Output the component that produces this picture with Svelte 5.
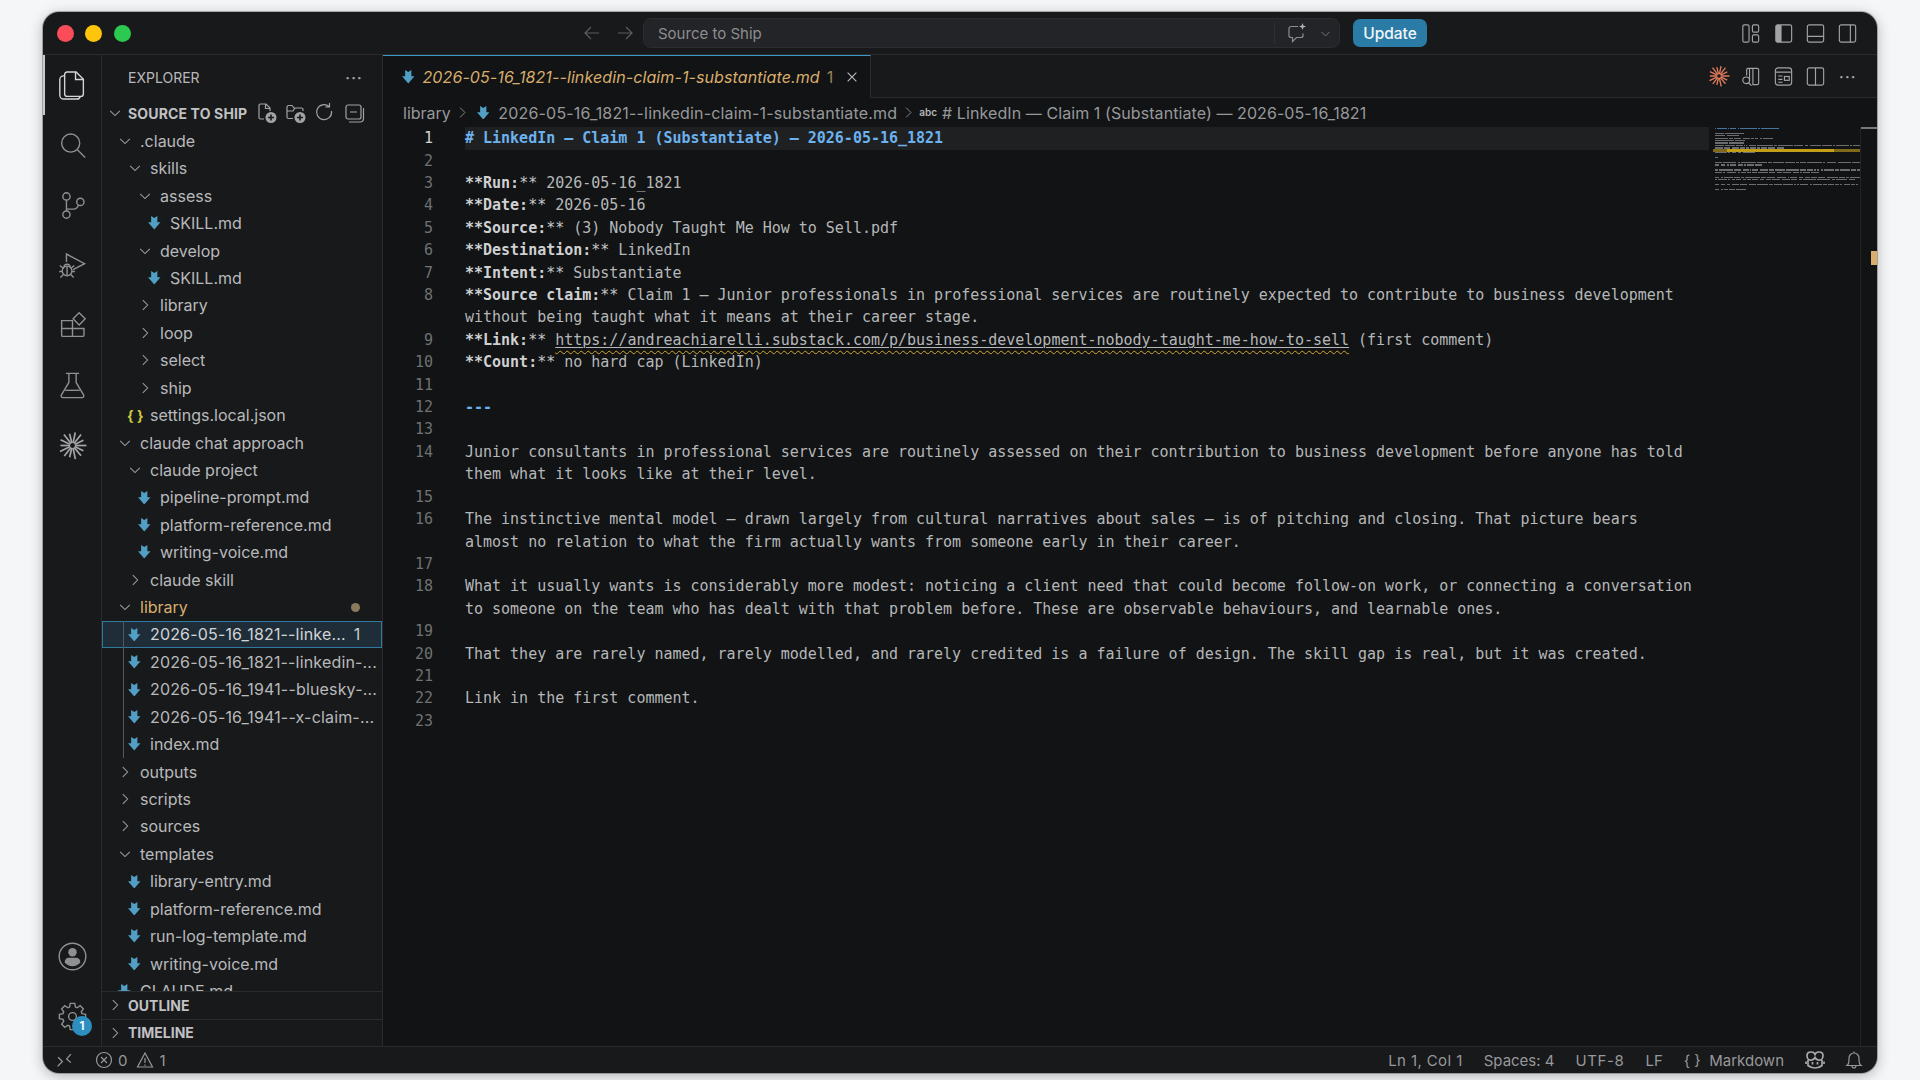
<script>
  const tree = [
    { name: '.claude', depth: 0, kind: 'open' },
    { name: 'skills', depth: 1, kind: 'open' },
    { name: 'assess', depth: 2, kind: 'open' },
    { name: 'SKILL.md', depth: 3, kind: 'md' },
    { name: 'develop', depth: 2, kind: 'open' },
    { name: 'SKILL.md', depth: 3, kind: 'md' },
    { name: 'library', depth: 2, kind: 'closed' },
    { name: 'loop', depth: 2, kind: 'closed' },
    { name: 'select', depth: 2, kind: 'closed' },
    { name: 'ship', depth: 2, kind: 'closed' },
    { name: 'settings.local.json', depth: 1, kind: 'json' },
    { name: 'claude chat approach', depth: 0, kind: 'open' },
    { name: 'claude project', depth: 1, kind: 'open' },
    { name: 'pipeline-prompt.md', depth: 2, kind: 'md' },
    { name: 'platform-reference.md', depth: 2, kind: 'md' },
    { name: 'writing-voice.md', depth: 2, kind: 'md' },
    { name: 'claude skill', depth: 1, kind: 'closed' },
    { name: 'library', depth: 0, kind: 'open', modified: true },
    { name: '2026-05-16_1821--linke...', depth: 1, kind: 'md', selected: true, guide: true, dated: true },
    { name: '2026-05-16_1821--linkedin-...', depth: 1, kind: 'md', guide: true, dated: true },
    { name: '2026-05-16_1941--bluesky-...', depth: 1, kind: 'md', guide: true, dated: true },
    { name: '2026-05-16_1941--x-claim-...', depth: 1, kind: 'md', guide: true, dated: true },
    { name: 'index.md', depth: 1, kind: 'md', guide: true },
    { name: 'outputs', depth: 0, kind: 'closed' },
    { name: 'scripts', depth: 0, kind: 'closed' },
    { name: 'sources', depth: 0, kind: 'closed' },
    { name: 'templates', depth: 0, kind: 'open' },
    { name: 'library-entry.md', depth: 1, kind: 'md' },
    { name: 'platform-reference.md', depth: 1, kind: 'md' },
    { name: 'run-log-template.md', depth: 1, kind: 'md' },
    { name: 'writing-voice.md', depth: 1, kind: 'md' },
    { name: 'CLAUDE.md', depth: 0, kind: 'md' },
  ];

  const url = 'https://andreachiarelli.substack.com/p/business-development-nobody-taught-me-how-to-sell';

  const rows = [
    { n: 1, text: '# LinkedIn — Claim 1 (Substantiate) — 2026-05-16_1821', type: 'heading' },
    { n: 2, text: '' },
    { n: 3, text: '**Run:** 2026-05-16_1821' },
    { n: 4, text: '**Date:** 2026-05-16' },
    { n: 5, text: '**Source:** (3) Nobody Taught Me How to Sell.pdf' },
    { n: 6, text: '**Destination:** LinkedIn' },
    { n: 7, text: '**Intent:** Substantiate' },
    { n: 8, text: '**Source claim:** Claim 1 — Junior professionals in professional services are routinely expected to contribute to business development' },
    { n: null, text: 'without being taught what it means at their career stage.' },
    { n: 9, text: '**Link:** ' + url + ' (first comment)', type: 'link' },
    { n: 10, text: '**Count:** no hard cap (LinkedIn)' },
    { n: 11, text: '' },
    { n: 12, text: '---', type: 'heading' },
    { n: 13, text: '' },
    { n: 14, text: 'Junior consultants in professional services are routinely assessed on their contribution to business development before anyone has told' },
    { n: null, text: 'them what it looks like at their level.' },
    { n: 15, text: '' },
    { n: 16, text: 'The instinctive mental model — drawn largely from cultural narratives about sales — is of pitching and closing. That picture bears' },
    { n: null, text: 'almost no relation to what the firm actually wants from someone early in their career.' },
    { n: 17, text: '' },
    { n: 18, text: 'What it usually wants is considerably more modest: noticing a client need that could become follow-on work, or connecting a conversation' },
    { n: null, text: 'to someone on the team who has dealt with that problem before. These are observable behaviours, and learnable ones.' },
    { n: 19, text: '' },
    { n: 20, text: 'That they are rarely named, rarely modelled, and rarely credited is a failure of design. The skill gap is real, but it was created.' },
    { n: 21, text: '' },
    { n: 22, text: 'Link in the first comment.' },
    { n: 23, text: '' },
  ];

  // **Label:** prefix, the rest of the line stays plain
  function bold(text) {
    const m = text.match(/^\*\*(.+?)\*\*(.*)$/);
    return m ? { label: m[1], rest: m[2] } : null;
  }

  const claudeRays = [0, 26, 50, 78, 104, 128, 154, 180, 206, 232, 256, 282, 308, 334].map((deg, i) => {
    const a = (deg * Math.PI) / 180;
    const r = i % 3 === 0 ? 11.5 : i % 3 === 1 ? 10 : 11;
    return { x1: 12 + Math.cos(a) * 2, y1: 12 + Math.sin(a) * 2, x2: 12 + Math.cos(a) * r, y2: 12 + Math.sin(a) * r };
  });

  // eight teeth around the centre of a 24 box
  function gearPath() {
    const pts = [];
    for (let i = 0; i < 8; i++) {
      const c = (i * Math.PI) / 4;
      const list = [[8.2, -0.3], [11, -0.17], [11, 0.17], [8.2, 0.3]];
      for (const [r, d] of list) {
        pts.push((12 + Math.cos(c + d) * r).toFixed(2) + ' ' + (12 + Math.sin(c + d) * r).toFixed(2));
      }
    }
    return 'M' + pts.join('L') + 'Z';
  }
  const gear = gearPath();
</script>

{#snippet md()}
  <svg class="md" viewBox="0 0 12 13"><polygon points="3,0 6,2 9,0 9,6 12,6 6,13 0,6 3,6" /></svg>
{/snippet}

{#snippet chevron(open)}
  <svg class="chev" viewBox="0 0 16 16">
    {#if open}
      <polyline points="2.5,5.5 8,11 13.5,5.5" />
    {:else}
      <polyline points="5.5,2.5 11,8 5.5,13.5" />
    {/if}
  </svg>
{/snippet}

{#snippet claude(cls)}
  <svg class={cls} viewBox="0 0 24 24">
    {#each claudeRays as r}
      <line x1={r.x1} y1={r.y1} x2={r.x2} y2={r.y2} />
    {/each}
  </svg>
{/snippet}

<div class="window">
  <header class="titlebar">
    <div class="lights">
      <span class="light red"></span>
      <span class="light yellow"></span>
      <span class="light green"></span>
    </div>
    <button class="nav">
      <svg class="ico dim" viewBox="0 0 20 20"><path d="M17 10H3.5M9 4l-6 6 6 6" /></svg>
    </button>
    <button class="nav">
      <svg class="ico dim" viewBox="0 0 20 20"><path d="M3 10h13.5M11 4l6 6-6 6" /></svg>
    </button>
    <div class="command">
      <span class="command-text">Source to Ship</span>
      <span class="command-sep"></span>
      <svg class="ico chat" viewBox="0 0 22 22">
        <path d="M12 4.5H5a2 2 0 0 0-2 2v7a2 2 0 0 0 2 2h1.5v4l4-4H15a2 2 0 0 0 2-2v-2" />
        <path class="fill" d="M16.5 1l.9 2.6 2.6.9-2.6.9-.9 2.6-.9-2.6-2.6-.9 2.6-.9z" />
      </svg>
      <svg class="ico small-chev" viewBox="0 0 16 16"><polyline points="3,6 8,11 13,6" /></svg>
    </div>
    <button class="update">Update</button>
    <div class="actions">
      <button class="act">
        <svg class="ico" viewBox="0 0 24 24">
          <rect x="4" y="3" width="6.5" height="18" rx="1.5" /><rect x="14" y="3" width="6.5" height="7.5" rx="1.5" /><rect x="14" y="13.5" width="6.5" height="7.5" rx="1.5" />
        </svg>
      </button>
      <button class="act">
        <svg class="ico" viewBox="0 0 24 24">
          <path class="fill" d="M5.5 3H10v18H5.5A1.5 1.5 0 0 1 4 19.5v-15A1.5 1.5 0 0 1 5.5 3z" /><rect x="4" y="3" width="16.5" height="18" rx="2" />
        </svg>
      </button>
      <button class="act">
        <svg class="ico" viewBox="0 0 24 24"><rect x="3.5" y="3" width="17" height="18" rx="2" /><path d="M3.5 15h17" /></svg>
      </button>
      <button class="act">
        <svg class="ico" viewBox="0 0 24 24"><rect x="3.5" y="3" width="17" height="18" rx="2" /><path d="M15 3v18" /></svg>
      </button>
    </div>
  </header>

  <div class="main">
    <nav class="activity">
      <div class="act-item active">
        <svg class="act-ico" viewBox="1.500 0 24 24">
          <path d="M9 .8h7.5l6 6V19a2 2 0 0 1-2 2H9a2 2 0 0 1-2-2V2.800a2 2 0 0 1 2-2z" />
          <path d="M16 .8V7h6.500" />
          <path d="M7 4H6A3 3 0 0 0 3 7v13a3.200 3.200 0 0 0 3.200 3.200H17a3 3 0 0 0 3-2.500" />
        </svg>
      </div>
      <div class="act-item">
        <svg class="act-ico" viewBox="0 0 24 24"><circle cx="10.500" cy="10" r="7.500" /><path d="M16 15.500l6.500 6.500" /></svg>
      </div>
      <div class="act-item">
        <svg class="act-ico" viewBox="0 0 24 24">
          <circle cx="7" cy="4.500" r="3" /><circle cx="7" cy="19.500" r="3" /><circle cx="18.500" cy="9" r="3" />
          <path d="M7 7.500v9M7 15h5.500c2.500 0 4-1.500 4.500-3.500" />
        </svg>
      </div>
      <div class="act-item">
        <svg class="act-ico" viewBox="0 0 24 24">
          <path d="M7 9V2.500l15 8-9.500 5" />
          <circle cx="7.500" cy="16.500" r="4" /><path d="M5 13.500a2.500 2.500 0 0 1 5 0M1.500 12l3 2.500M13.500 12l-3 2.500M1 17h2.500M14 17h-2.500M2 22l2.500-2.500M13 22l-2.500-2.500M7.500 13v7" />
        </svg>
      </div>
      <div class="act-item">
        <svg class="act-ico" viewBox="0 0 24 24">
          <path d="M3 8h9v13H4a1 1 0 0 1-1-1zM3 14.500h18.500V20a1 1 0 0 1-1 1H12" />
          <path d="M17.500 1.500l5 5-5 5-5-5z" />
        </svg>
      </div>
      <div class="act-item">
        <svg class="act-ico" viewBox="0 0 24 24">
          <path d="M6.500 2h11M9 2v7.500L3 19.500a1.500 1.500 0 0 0 1.300 2.500h15.400a1.500 1.500 0 0 0 1.300-2.500L15 9.500V2" />
          <path d="M6 16h12" />
        </svg>
      </div>
      <div class="act-item">
        {@render claude('act-ico claude')}
      </div>
      <div class="spacer"></div>
      <div class="act-item">
        <svg class="act-ico" viewBox="0 0 24 24">
          <circle cx="12" cy="12" r="11" /><circle class="fill" cx="12" cy="8.500" r="3.500" />
          <path class="fill" d="M5.500 17c0-2.500 1.500-4 3.500-4h6c2 0 3.500 1.500 3.500 4a8.500 8.500 0 0 1-13 0z" />
        </svg>
      </div>
      <div class="act-item">
        <svg class="act-ico" viewBox="0 0 24 24">
          <path d={gear} />
          <circle cx="12" cy="12" r="3.200" />
        </svg>
        <span class="badge">1</span>
      </div>
    </nav>

    <aside class="sidebar">
      <div class="side-head">
        <span>EXPLORER</span>
        <span class="dots">···</span>
      </div>
      <div class="workspace">
        <span class="twist">{@render chevron(true)}</span>
        <strong>SOURCE TO SHIP</strong>
        <div class="ws-icons">
          <svg class="ico" viewBox="0 0 22 22">
            <path d="M8 17H4.500A1.500 1.500 0 0 1 3 15.500v-12A1.500 1.500 0 0 1 4.500 2H10l4 4v3M9.500 2v4.500H14" />
            <circle class="fill solid" cx="15" cy="15.500" r="5.500" /><path class="dark" d="M15 12.500v6M12 15.500h6" />
          </svg>
          <svg class="ico" viewBox="0 0 22 22">
            <path d="M8 16.500H3.500A1.500 1.500 0 0 1 2 15V5a1.500 1.500 0 0 1 1.500-1.500H7l2 2.500h7.500A1.500 1.500 0 0 1 18 7.500V9M2 9h6l2-3" />
            <circle class="fill solid" cx="15" cy="15.500" r="5.500" /><path class="dark" d="M15 12.500v6M12 15.500h6" />
          </svg>
          <svg class="ico" viewBox="0 0 22 22"><path d="M17.500 9a7.500 7.500 0 1 1-2.500-4.500M15.500 1v4h-4.200" /></svg>
          <svg class="ico" viewBox="0 0 22 22">
            <rect x="3" y="3" width="15" height="14" rx="2" /><path d="M7 10h7M6 20h11a3.500 3.500 0 0 0 3.500-3.500V6" />
          </svg>
        </div>
      </div>
      <div class="tree">
        {#each tree as item}
          <div class="row" class:selected={item.selected} style="padding-left: {13 + item.depth * 10}px">
            {#if item.guide}<span class="guide"></span>{/if}
            <span class="twist">
              {#if item.kind === 'open'}
                {@render chevron(true)}
              {:else if item.kind === 'closed'}
                {@render chevron(false)}
              {:else if item.kind === 'md'}
                {@render md()}
              {:else}
                <span class="json">{'{ }'}</span>
              {/if}
            </span>
            <span class="label" class:modified={item.modified} class:dated={item.dated}>{item.name}</span>
            {#if item.selected}<span class="count">1</span>{/if}
            {#if item.modified}<span class="dot"></span>{/if}
          </div>
        {/each}
      </div>
      <div class="pane">
        <span class="twist">{@render chevron(false)}</span>
        <strong>OUTLINE</strong>
      </div>
      <div class="pane">
        <span class="twist">{@render chevron(false)}</span>
        <strong>TIMELINE</strong>
      </div>
    </aside>

    <section class="editor">
      <div class="tabs">
        <div class="tab">
          {@render md()}
          <span class="tab-name">2026-05-16_1821--linkedin-claim-1-substantiate.md</span>
          <span class="tab-count">1</span>
          <svg class="ico close" viewBox="0 0 16 16"><path d="M3 3l10 10M13 3L3 13" /></svg>
        </div>
        <div class="tab-actions">
          <button class="act">{@render claude('act-ico claude orange')}</button>
          <button class="act">
            <svg class="ico" viewBox="0 0 24 24">
              <path d="M11 17V3.500h8A1.500 1.500 0 0 1 20.500 5v14a1.500 1.500 0 0 1-1.500 1.500h-4.500V3.500M11 3.500H9.500A1.500 1.500 0 0 0 8 5v6" />
              <circle cx="7.500" cy="16" r="3.500" /><path d="M10 18.500l3 3" />
            </svg>
          </button>
          <button class="act">
            <svg class="ico" viewBox="0 0 24 24">
              <rect x="3.500" y="3" width="17" height="18" rx="3" /><path d="M3.500 7.500h17M6.500 11.500h4.500M6.500 15h4.500M6.500 18h4.500" /><rect x="13" y="12" width="5" height="4" />
            </svg>
          </button>
          <button class="act">
            <svg class="ico" viewBox="0 0 24 24"><rect x="3.500" y="3" width="17" height="18" rx="2" /><path d="M12 3v18" /></svg>
          </button>
          <button class="act"><span class="dots">···</span></button>
        </div>
      </div>

      <div class="crumbs">
        <span>library</span>
        <svg class="ico crumb-chev first" viewBox="0 0 16 16"><polyline points="5,2 11,8 5,14" /></svg>
        {@render md()}
        <span class="crumb-file">2026-05-16_1821--linkedin-claim-1-substantiate.md</span>
        <svg class="ico crumb-chev" viewBox="0 0 16 16"><polyline points="5,2 11,8 5,14" /></svg>
        <span class="abc">abc</span>
        <span class="crumb-head"># LinkedIn — Claim 1 (Substantiate) — 2026-05-16_1821</span>
      </div>

      <div class="body">
        <div class="code">
          {#each rows as row, i}
            {@const b = bold(row.text)}
            <div class="line" class:current={i === 0}>
              <span class="num" class:current-num={i === 0}>{row.n ?? ''}</span>
              <span class="text" class:heading={row.type === 'heading'}>
                {#if row.type === 'link'}
                  <b>**{b.label}</b><span class="stars">**</span> <span class="squiggle"><span class="url">{url}</span></span> (first comment)
                {:else if b}
                  <b>**{b.label}</b><span class="stars">**</span>{b.rest}
                {:else}
                  {row.text}
                {/if}
              </span>
            </div>
          {/each}
        </div>
        <div class="minimap">
          {#each rows as row}
            <div class="mini-row" class:mini-link={row.type === 'link'} class:mini-head={row.type === 'heading'}>
              {#each row.text.split(' ') as word}
                <span class="mini-word" class:mini-url={word === url} style="width: {word.length * 1.22}px"></span>
              {/each}
            </div>
          {/each}
        </div>
        <div class="ruler">
          <span class="ruler-top"></span>
          <span class="ruler-mark"></span>
        </div>
      </div>
    </section>
  </div>

  <footer class="status">
    <svg class="ico remote" viewBox="0 0 16 16"><path d="M1.500 13.500L6 9 2 5M14 2L10 6.500l4 3.500" /></svg>
    <div class="problems">
      <svg class="ico" viewBox="0 0 18 18"><circle cx="9" cy="9" r="7.500" /><path d="M6 6l6 6M12 6l-6 6" /></svg>
      <span>0</span>
      <svg class="ico warn" viewBox="0 0 18 18"><path d="M9 2l7.500 14h-15zM9 7v5M9 13.500v1.200" /></svg>
      <span>1</span>
    </div>
    <div class="status-right">
      <span class="st-ln">Ln 1, Col 1</span>
      <span>Spaces: 4</span>
      <span class="st-enc">UTF-8</span>
      <span>LF</span>
      <span>{'{ }'}&nbsp; Markdown</span>
      <svg class="ico copilot" viewBox="0 0 22 20">
        <path d="M4.500 9.500C3 8.500 3 7 3 5.500 3 3 5 2 7 2c2.500 0 4 1.200 4 3.500C11 3.200 12.500 2 15 2c2 0 4 1 4 3.500 0 1.500 0 3-1.500 4-2 1.200-5 .8-6.500-2-1.500 2.800-4.500 3.200-6.500 2z" />
        <path d="M4 10v5.500c2 1.700 4.500 2.500 7 2.500s5-.8 7-2.500V10M2 11.500v2.500M20 11.500v2.500" />
        <path d="M8.500 12v2.500M13.500 12v2.500" />
      </svg>
      <svg class="ico bell" viewBox="0 0 20 20">
        <path d="M3 15.500c1.500-1 2-2.500 2-5V8a5 5 0 0 1 10 0v2.500c0 2.500.5 4 2 5zM8 15.500a2 2.500 0 0 0 4 0M10 1.500V3" />
      </svg>
    </div>
  </footer>
</div>

<style>
  :global(body) {
    background: #f5f6f8;
    height: 1080px;
    overflow: hidden;
  }

  .window {
    display: flex;
    flex-direction: column;
    width: 1834px;
    height: 1061px;
    margin: 12px 0 0 43px;
    background: #18191b;
    border-radius: 16px;
    overflow: hidden;
    box-shadow: 0 0 0 1px rgba(60, 60, 60, 0.35), 0 3px 14px rgba(0, 0, 0, 0.28);
    font-family: Inter, "Noto Sans", sans-serif;
    font-size: 16px;
    color: #b8b9bb;
  }

  button {
    border: none;
    background: none;
    padding: 0;
    font: inherit;
    color: inherit;
  }

  svg {
    display: block;
    flex: none;
  }

  .ico {
    width: 20px;
    height: 20px;
    fill: none;
    stroke: #a2a3a5;
    stroke-width: 1.2;
  }

  .ico .fill {
    fill: #a2a3a5;
    stroke: none;
  }

  .ico .solid {
    fill: #a2a3a5;
  }

  .ico .dark {
    stroke: #18191b;
    stroke-width: 1.600;
  }

  .ico.dim {
    stroke: #5c5d60;
  }

  .md {
    width: 12.500px;
    height: 13.500px;
    fill: #519fc4;
  }

  .chev {
    width: 14px;
    height: 14px;
    fill: none;
    stroke: #9a9b9d;
    stroke-width: 1.200;
  }

  /* title bar */
  .titlebar {
    display: flex;
    align-items: center;
    flex: none;
    height: 43px;
    box-sizing: border-box;
    border-bottom: 1px solid #2a2b2d;
  }

  .lights {
    display: flex;
    gap: 11.700px;
    box-sizing: border-box;
    width: 532.500px;
    padding-left: 13.500px;
  }

  .light {
    width: 17px;
    height: 17px;
    border-radius: 50%;
  }

  .red { background: #fb4d59; }
  .yellow { background: #ffc40c; }
  .green { background: #2bc94f; }

  .nav {
    display: flex;
    justify-content: center;
    width: 33px;
  }

  .command {
    display: flex;
    align-items: center;
    box-sizing: border-box;
    width: 697px;
    height: 30px;
    margin-left: 1.500px;
    padding: 0 7px 0 14px;
    background: #232427;
    border: 1px solid #2b2c2f;
    border-radius: 8px;
  }

  .command-text {
    flex: 1;
    color: #8d8e90;
    font-size: 15px;
  }

  .command-sep {
    width: 1px;
    height: 22px;
    background: #2e2f32;
  }

  .chat {
    width: 22px;
    height: 22px;
    margin-left: 10.500px;
    stroke: #8d8e90;
  }

  .chat .fill {
    fill: #b0b1b3;
  }

  .small-chev {
    width: 13px;
    height: 13px;
    margin-left: 11.500px;
    stroke: #77787a;
  }

  .update {
    width: 74px;
    height: 28px;
    margin-left: 13px;
    background: #2a7ca6;
    border-radius: 7px;
    color: #f2f6f8;
    font-size: 15.500px;
    font-weight: 500;
  }

  .actions,
  .tab-actions {
    display: flex;
    margin-left: auto;
    padding-right: 13px;
  }

  .act {
    display: flex;
    align-items: center;
    justify-content: center;
    width: 32.300px;
  }

  .act .ico {
    width: 23px;
    height: 23px;
  }

  .main {
    display: flex;
    flex: 1;
    min-height: 0;
  }

  /* activity bar */
  .activity {
    display: flex;
    flex-direction: column;
    flex: none;
    box-sizing: border-box;
    width: 59px;
    border-right: 1px solid #2a2b2d;
  }

  .act-item {
    position: relative;
    display: flex;
    align-items: center;
    justify-content: center;
    flex: none;
    height: 60px;
  }

  .act-item.active::before {
    content: "";
    position: absolute;
    left: 0;
    top: 0;
    bottom: 0;
    width: 2px;
    background: #c9cacc;
  }

  .act-ico {
    width: 29px;
    height: 29px;
    fill: none;
    stroke: #8f9092;
    stroke-width: 1.150;
  }

  .act-item.active .act-ico {
    stroke: #d4d5d7;
  }

  .act-ico .fill {
    fill: #8f9092;
    stroke: none;
  }

  .act-ico.claude {
    stroke: #a5a6a8;
    stroke-width: 1.400;
  }

  .act-ico.orange {
    width: 22px;
    height: 22px;
    stroke: #dd7a5c;
    stroke-width: 1.500;
  }

  .spacer {
    flex: 1;
  }

  .badge {
    position: absolute;
    left: 29px;
    top: 30px;
    width: 20px;
    height: 20px;
    border-radius: 50%;
    background: #2d8fc0;
    color: #f2f7fa;
    font-size: 11.500px;
    font-weight: 700;
    line-height: 20px;
    text-align: center;
  }

  /* sidebar */
  .sidebar {
    display: flex;
    flex-direction: column;
    flex: none;
    box-sizing: border-box;
    width: 281px;
    border-right: 1px solid #2a2b2d;
  }

  .side-head {
    display: flex;
    align-items: center;
    justify-content: space-between;
    flex: none;
    height: 44px;
    padding: 0 19px 0 26px;
    font-size: 14px;
  }

  .dots {
    font-size: 14px;
    font-weight: 700;
    letter-spacing: 1.200px;
    color: #a2a3a5;
  }

  .workspace,
  .pane {
    display: flex;
    align-items: center;
    flex: none;
    padding-left: 6px;
    font-size: 14px;
    color: #c0c1c3;
  }

  .workspace {
    height: 28.200px;
  }

  .workspace strong {
    letter-spacing: 0.150px;
  }

  .workspace strong,
  .pane strong {
    font-weight: 700;
  }

  .ws-icons {
    display: flex;
    gap: 7px;
    margin-left: 9px;
  }

  .ws-icons .ico {
    width: 22px;
    height: 22px;
  }

  .tree {
    flex: 1;
    min-height: 0;
    overflow: hidden;
  }

  .row {
    position: relative;
    display: flex;
    align-items: center;
    box-sizing: border-box;
    height: 27.430px;
    padding-right: 5px;
    white-space: nowrap;
  }

  .row.selected {
    background: #1e2d38;
    outline: 1px solid #2f7a9e;
    outline-offset: -1px;
  }

  .guide {
    position: absolute;
    left: 21px;
    top: 0;
    bottom: 0;
    width: 1px;
    background: #55565a;
  }

  .twist {
    display: flex;
    align-items: center;
    justify-content: flex-start;
    flex: none;
    width: 20px;
    margin-right: 5px;
    padding-left: 3px;
    box-sizing: border-box;
  }

  .workspace .twist,
  .pane .twist {
    width: 20px;
    margin-right: 0;
    padding-left: 0;
  }

  .json {
    margin-left: -1px;
    color: #cbcb41;
    font-size: 14px;
    font-weight: 700;
    white-space: pre;
  }

  .label {
    flex: 1;
    min-width: 0;
  }

  .label.dated {
    letter-spacing: 0.170px;
  }

  .label.modified {
    color: #d7b06f;
  }

  .row.selected .label {
    color: #d3d4d6;
  }

  .count {
    width: 16px;
    margin: 0 12px 0 6px;
    text-align: center;
    color: #c9cacc;
  }

  .dot {
    width: 9px;
    height: 9px;
    margin-right: 17px;
    border-radius: 50%;
    background: #8a7a5c;
  }

  .pane {
    box-sizing: border-box;
    height: 27.500px;
    border-top: 1px solid #2a2b2d;
  }

  /* editor */
  .editor {
    display: flex;
    flex-direction: column;
    flex: 1;
    min-width: 0;
    background: #111315;
  }

  .tabs {
    display: flex;
    align-items: stretch;
    flex: none;
    box-sizing: border-box;
    height: 43px;
    background: #18191b;
    border-bottom: 1px solid #2a2b2d;
  }

  .tab {
    display: flex;
    align-items: center;
    box-sizing: border-box;
    width: 488px;
    height: 43px;
    padding-left: 19px;
    background: #111315;
    border-top: 1.500px solid #3d9ac6;
    border-right: 1px solid #2a2b2d;
  }

  .tab-name {
    margin-left: 8px;
    color: #d9ad6b;
    font-style: italic;
    letter-spacing: 0.100px;
    white-space: nowrap;
  }

  .tab-count {
    margin-left: 7px;
    color: #9a8358;
  }

  .close {
    width: 14px;
    height: 14px;
    margin-left: 12px;
    stroke: #c0c1c3;
  }

  .crumbs {
    display: flex;
    align-items: center;
    flex: none;
    height: 29.200px;
    padding-left: 20px;
    color: #97989a;
    white-space: nowrap;
  }

  .crumbs .md {
    margin-right: 9px;
  }

  .crumb-file {
    letter-spacing: 0.180px;
  }

  .crumb-head {
    letter-spacing: 0.080px;
  }

  .crumb-chev {
    width: 13px;
    height: 13px;
    margin: 0 2px 0 5px;
    stroke: #8a8b8d;
  }

  .crumb-chev.first {
    margin-right: 8px;
  }

  .abc {
    position: relative;
    top: -1px;
    margin: 0 5px 0 2px;
    font-size: 10px;
    font-weight: 600;
    color: #b4b5b7;
  }

  .body {
    display: flex;
    flex: 1;
    min-height: 0;
  }

  .code {
    flex: none;
    width: 1326px;
    font-family: "DejaVu Sans Mono", "Liberation Mono", monospace;
    font-size: 15px;
    letter-spacing: -0.010px;
    color: #b6b7b8;
  }

  .line {
    display: flex;
    height: 22.420px;
    line-height: 22.420px;
    white-space: pre;
  }

  .num {
    flex: none;
    box-sizing: border-box;
    width: 82px;
    padding-right: 32px;
    text-align: right;
    color: #6f7173;
  }

  .current-num {
    color: #d4d5d6;
  }

  .text {
    flex: 1;
    min-width: 0;
  }

  .line.current .text {
    background: #1f2022;
  }

  .text b {
    font-weight: 700;
    color: #cfd0d1;
  }

  .stars {
    color: #c6c7c8;
  }

  .heading {
    font-weight: 700;
    color: #6cb2ee;
  }

  .squiggle {
    text-decoration: underline wavy #d3a72a 1.200px;
    text-underline-offset: 5px;
  }

  .url {
    text-decoration: underline solid #b6b7b8 1px;
    text-underline-offset: 2px;
  }

  .minimap {
    flex: none;
    box-sizing: border-box;
    width: 147px;
    margin-left: 4px;
    padding-left: 1.500px;
    overflow: hidden;
  }

  .mini-row {
    display: flex;
    align-items: center;
    gap: 1.220px;
    height: 2.450px;
    white-space: nowrap;
  }

  .mini-word {
    flex: none;
    height: 1.300px;
    background: #6a6c6e;
  }

  .mini-head .mini-word {
    background: #44749f;
  }

  .mini-link {
    height: 3px;
    margin-bottom: -0.550px;
    margin-left: -1.500px;
    padding-left: 1.500px;
    background: #7f6a1c;
  }

  .mini-link .mini-word {
    height: 3px;
    background: #7f6a1c;
  }

  .mini-link .mini-url {
    background: #c29f17;
  }

  .ruler {
    position: relative;
    flex: 1;
    border-left: 1px solid #232426;
  }

  .ruler-top {
    position: absolute;
    left: 0;
    right: 0;
    top: 0;
    height: 2px;
    background: #77787a;
  }

  .ruler-mark {
    position: absolute;
    right: 0;
    top: 124px;
    width: 6px;
    height: 14px;
    background: #d9ad6b;
  }

  /* status bar */
  .status {
    display: flex;
    align-items: center;
    flex: none;
    box-sizing: border-box;
    height: 27px;
    padding-left: 13px;
    border-top: 1px solid #2a2b2d;
    font-size: 15px;
    color: #97989a;
  }

  .status .ico {
    stroke: #97989a;
  }

  .status .copilot {
    stroke-width: 1.700;
    stroke: #a8a9ab;
  }

  .remote {
    width: 17px;
    height: 17px;
  }

  .problems {
    display: flex;
    align-items: center;
    gap: 5px;
    margin-left: 22px;
  }

  .problems .ico {
    width: 18px;
    height: 18px;
  }

  .problems .warn {
    margin-left: 4px;
  }

  .status-right {
    display: flex;
    align-items: center;
    gap: 21px;
    margin-left: auto;
    padding-right: 13px;
  }

  .st-ln {
    letter-spacing: 0.400px;
  }

  .st-enc {
    letter-spacing: 0.600px;
  }

  .copilot {
    width: 22px;
    height: 20px;
    margin-left: -1px;
  }

  .bell {
    width: 20px;
    height: 20px;
    margin-left: -3px;
  }
</style>
